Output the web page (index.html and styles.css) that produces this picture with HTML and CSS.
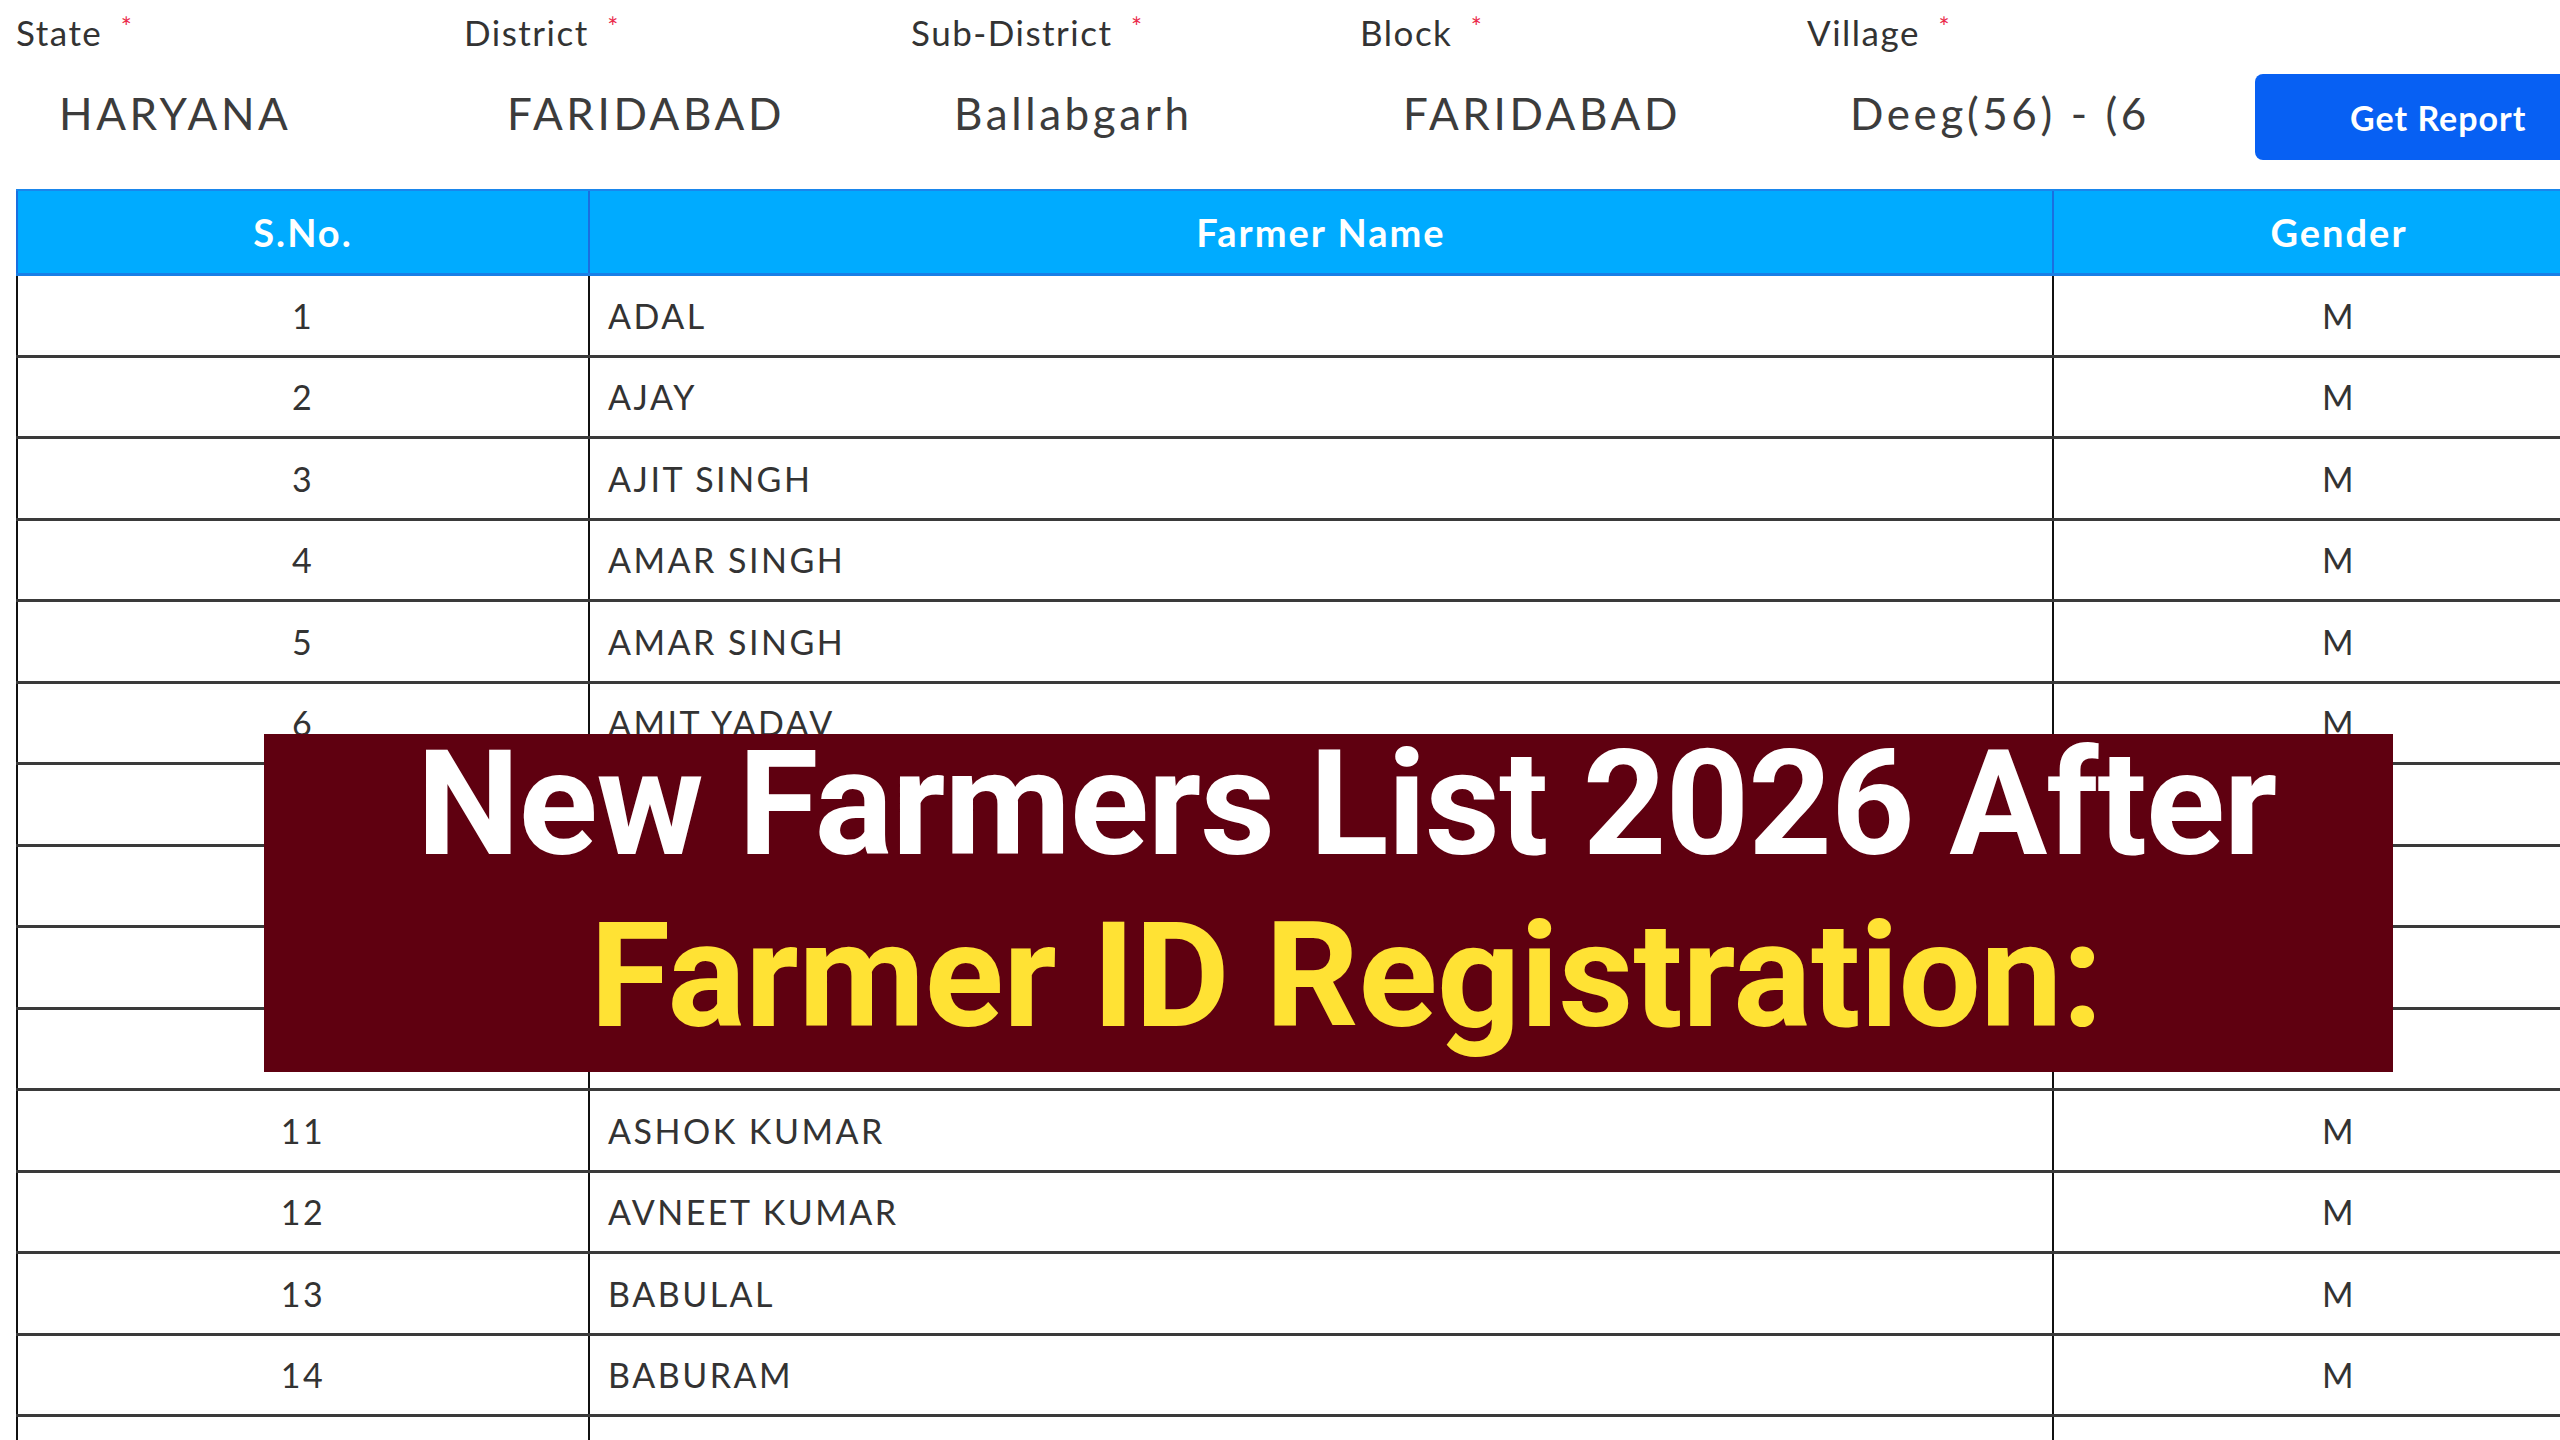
FILE: index.html
```html
<!DOCTYPE html>
<html>
<head>
<meta charset="utf-8">
<link rel="stylesheet" href="styles.css">
</head>
<body>
<div class="page">
  <div class="filters">
    <div class="field"><div class="label">State <span class="req">*</span></div><div class="value">HARYANA</div></div>
    <div class="field"><div class="label">District <span class="req">*</span></div><div class="value">FARIDABAD</div></div>
    <div class="field"><div class="label">Sub-District <span class="req">*</span></div><div class="value">Ballabgarh</div></div>
    <div class="field"><div class="label">Block <span class="req">*</span></div><div class="value">FARIDABAD</div></div>
    <div class="field"><div class="label">Village <span class="req">*</span></div><div class="value">Deeg(56) - (6</div></div>
    <div class="field btn-field"><button class="btn">Get Report</button></div>
  </div>

  <div class="grid">
    <div class="row head">
      <div class="cell c-sno">S.No.</div><div class="cell c-name">Farmer Name</div><div class="cell c-gender">Gender</div>
    </div>
    <div class="row"><div class="cell c-sno">1</div><div class="cell c-name">ADAL</div><div class="cell c-gender">M</div></div>
    <div class="row"><div class="cell c-sno">2</div><div class="cell c-name">AJAY</div><div class="cell c-gender">M</div></div>
    <div class="row"><div class="cell c-sno">3</div><div class="cell c-name">AJIT SINGH</div><div class="cell c-gender">M</div></div>
    <div class="row"><div class="cell c-sno">4</div><div class="cell c-name">AMAR SINGH</div><div class="cell c-gender">M</div></div>
    <div class="row"><div class="cell c-sno">5</div><div class="cell c-name">AMAR SINGH</div><div class="cell c-gender">M</div></div>
    <div class="row"><div class="cell c-sno">6</div><div class="cell c-name">AMIT YADAV</div><div class="cell c-gender">M</div></div>
    <div class="row"><div class="cell c-sno">7</div><div class="cell c-name">ANIL KUMAR</div><div class="cell c-gender">M</div></div>
    <div class="row"><div class="cell c-sno">8</div><div class="cell c-name">ARJUN</div><div class="cell c-gender">M</div></div>
    <div class="row"><div class="cell c-sno">9</div><div class="cell c-name">ARUN</div><div class="cell c-gender">M</div></div>
    <div class="row"><div class="cell c-sno">10</div><div class="cell c-name">ASHOK</div><div class="cell c-gender">M</div></div>
    <div class="row"><div class="cell c-sno">11</div><div class="cell c-name">ASHOK KUMAR</div><div class="cell c-gender">M</div></div>
    <div class="row"><div class="cell c-sno">12</div><div class="cell c-name">AVNEET KUMAR</div><div class="cell c-gender">M</div></div>
    <div class="row"><div class="cell c-sno">13</div><div class="cell c-name">BABULAL</div><div class="cell c-gender">M</div></div>
    <div class="row"><div class="cell c-sno">14</div><div class="cell c-name">BABURAM</div><div class="cell c-gender">M</div></div>
    <div class="row"><div class="cell c-sno"></div><div class="cell c-name"></div><div class="cell c-gender"></div></div>
  </div>

  <div class="banner">
    <div class="line1">New Farmers List 2026 After</div>
    <div class="line2">Farmer ID Registration:</div>
  </div>
</div>
</body>
</html>
```

FILE: styles.css
```css
html, body {
  margin: 0;
  padding: 0;
  background: #ffffff;
  overflow: hidden;
}
body {
  width: 2560px;
  height: 1440px;
  font-family: Lato, "Open Sans", sans-serif;
  color: #333;
}
.page {
  position: relative;
  width: 2560px;
  height: 1440px;
  overflow: hidden;
}
.filters {
  display: grid;
  grid-template-columns: 448px 447px 449px 447px 448px 400px;
  padding-left: 16px;
  height: 189px;
}
.field {
  display: flex;
  flex-direction: column;
}
.label {
  font-size: 35px;
  line-height: 35px;
  padding-top: 10px;
  color: #333;
  letter-spacing: 1.5px;
  white-space: nowrap;
}
.req {
  color: #ea2a4a;
  font-size: 26px;
  vertical-align: 9px;
  margin-left: 8px;
}
.value {
  font-size: 44px;
  line-height: 44px;
  font-weight: 400;
  padding-top: 41px;
  padding-left: 43px;
  color: #3c3c3c;
  letter-spacing: 3.6px;
  white-space: nowrap;
}
.btn-field {
  padding-top: 74px;
}
.btn {
  width: 330px;
  height: 86px;
  border: none;
  border-radius: 8px;
  background: #0760f3;
  color: #fff;
  font-family: Lato, sans-serif;
  font-weight: 700;
  font-size: 34px;
  text-align: left;
  padding: 0 0 0 95px;
  letter-spacing: 1px;
}
.grid {
  margin-left: 16px;
  width: 2608px;
}
.row {
  display: grid;
  grid-template-columns: 572px 1464px 572px;
  height: 81.5px;
  box-sizing: border-box;
  border-bottom: 3px solid #3a3a3a;
}
.cell {
  box-sizing: border-box;
  border-left: 2px solid #111;
  display: flex;
  align-items: center;
  font-size: 34px;
  color: #333;
  letter-spacing: 2.5px;
  white-space: nowrap;
}
.c-sno, .c-gender {
  justify-content: center;
}
.c-name {
  padding-left: 18px;
}
.row.head {
  height: 87px;
  background: #00abff;
  border-top: 2px solid #1a86ec;
  border-bottom: 3px solid #1a7fe6;
}
.row.head .cell {
  color: #fff;
  font-weight: 700;
  font-size: 38px;
  letter-spacing: 2px;
  justify-content: center;
  padding-left: 0;
  border-left: 2px solid #1a6fe0;
}
.banner {
  position: absolute;
  left: 264px;
  top: 734px;
  width: 2129px;
  height: 338px;
  box-sizing: border-box;
  padding-left: 36px;
  background: #5f0010;
  font-family: Roboto, "Liberation Sans", sans-serif;
  font-weight: 700;
  text-align: center;
  white-space: nowrap;
}
.line1 {
  color: #ffffff;
  font-size: 146px;
  line-height: 142px;
  letter-spacing: -1px;
}
.line2 {
  color: #ffe234;
  font-size: 146px;
  line-height: 172px;
  padding-top: 15px;
  letter-spacing: -0.3px;
}
```
